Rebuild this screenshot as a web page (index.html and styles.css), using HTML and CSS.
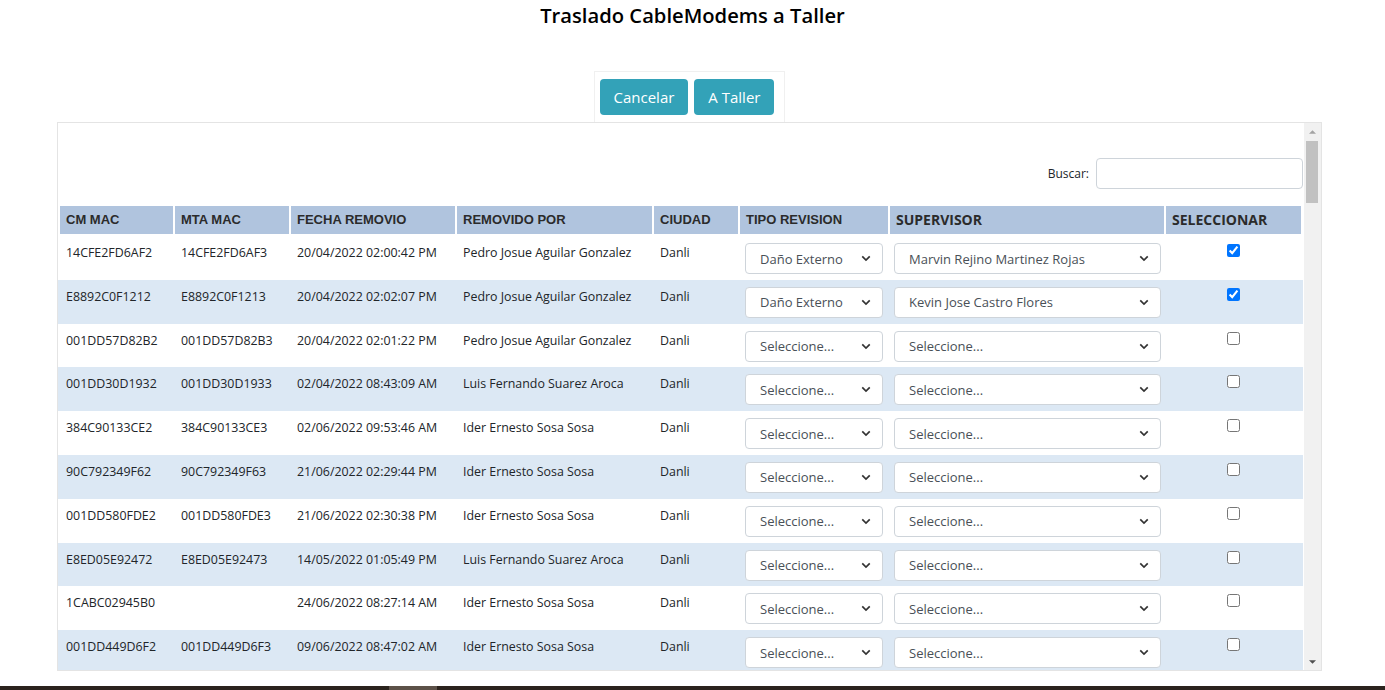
FILE: index.html
```html
<!DOCTYPE html>
<html lang="es">
<head>
<meta charset="utf-8">
<title>Traslado CableModems a Taller</title>
<link rel="stylesheet" href="styles.css">
</head>
<body>
<h1 class="title">Traslado CableModems a Taller</h1>
<div class="actions">
  <div class="btn-group">
    <button class="btn" type="button">Cancelar</button>
    <button class="btn" type="button">A Taller</button>
  </div>
</div>
<div class="panel">
  <div class="scroller">
    <div class="search">
      <label for="buscar">Buscar:</label>
      <input id="buscar" type="text">
    </div>
    <table class="grid">
      <colgroup>
        <col class="c-cm"><col class="c-mta"><col class="c-fecha"><col class="c-por"><col class="c-ciudad"><col class="c-tipo"><col class="c-sup"><col class="c-sel">
      </colgroup>
      <thead>
        <tr>
          <th>CM MAC</th><th>MTA MAC</th><th>FECHA REMOVIO</th><th>REMOVIDO POR</th><th>CIUDAD</th><th>TIPO REVISION</th><th class="alt-font">SUPERVISOR</th><th class="alt-font">SELECCIONAR</th>
        </tr>
      </thead>
      <tbody>
        <tr><td>14CFE2FD6AF2</td><td>14CFE2FD6AF3</td><td>20/04/2022 02:00:42 PM</td><td>Pedro Josue Aguilar Gonzalez</td><td>Danli</td><td class="tipo"><select class="sel"><option>Daño Externo</option></select></td><td class="sup"><select class="sel"><option>Marvin Rejino Martinez Rojas</option></select></td><td class="chk"><input type="checkbox" checked></td></tr>
        <tr><td>E8892C0F1212</td><td>E8892C0F1213</td><td>20/04/2022 02:02:07 PM</td><td>Pedro Josue Aguilar Gonzalez</td><td>Danli</td><td class="tipo"><select class="sel"><option>Daño Externo</option></select></td><td class="sup"><select class="sel"><option>Kevin Jose Castro Flores</option></select></td><td class="chk"><input type="checkbox" checked></td></tr>
        <tr><td>001DD57D82B2</td><td>001DD57D82B3</td><td>20/04/2022 02:01:22 PM</td><td>Pedro Josue Aguilar Gonzalez</td><td>Danli</td><td class="tipo"><select class="sel"><option>Seleccione...</option></select></td><td class="sup"><select class="sel"><option>Seleccione...</option></select></td><td class="chk"><input type="checkbox"></td></tr>
        <tr><td>001DD30D1932</td><td>001DD30D1933</td><td>02/04/2022 08:43:09 AM</td><td>Luis Fernando Suarez Aroca</td><td>Danli</td><td class="tipo"><select class="sel"><option>Seleccione...</option></select></td><td class="sup"><select class="sel"><option>Seleccione...</option></select></td><td class="chk"><input type="checkbox"></td></tr>
        <tr><td>384C90133CE2</td><td>384C90133CE3</td><td>02/06/2022 09:53:46 AM</td><td>Ider Ernesto Sosa Sosa</td><td>Danli</td><td class="tipo"><select class="sel"><option>Seleccione...</option></select></td><td class="sup"><select class="sel"><option>Seleccione...</option></select></td><td class="chk"><input type="checkbox"></td></tr>
        <tr><td>90C792349F62</td><td>90C792349F63</td><td>21/06/2022 02:29:44 PM</td><td>Ider Ernesto Sosa Sosa</td><td>Danli</td><td class="tipo"><select class="sel"><option>Seleccione...</option></select></td><td class="sup"><select class="sel"><option>Seleccione...</option></select></td><td class="chk"><input type="checkbox"></td></tr>
        <tr><td>001DD580FDE2</td><td>001DD580FDE3</td><td>21/06/2022 02:30:38 PM</td><td>Ider Ernesto Sosa Sosa</td><td>Danli</td><td class="tipo"><select class="sel"><option>Seleccione...</option></select></td><td class="sup"><select class="sel"><option>Seleccione...</option></select></td><td class="chk"><input type="checkbox"></td></tr>
        <tr><td>E8ED05E92472</td><td>E8ED05E92473</td><td>14/05/2022 01:05:49 PM</td><td>Luis Fernando Suarez Aroca</td><td>Danli</td><td class="tipo"><select class="sel"><option>Seleccione...</option></select></td><td class="sup"><select class="sel"><option>Seleccione...</option></select></td><td class="chk"><input type="checkbox"></td></tr>
        <tr><td>1CABC02945B0</td><td></td><td>24/06/2022 08:27:14 AM</td><td>Ider Ernesto Sosa Sosa</td><td>Danli</td><td class="tipo"><select class="sel"><option>Seleccione...</option></select></td><td class="sup"><select class="sel"><option>Seleccione...</option></select></td><td class="chk"><input type="checkbox"></td></tr>
        <tr><td>001DD449D6F2</td><td>001DD449D6F3</td><td>09/06/2022 08:47:02 AM</td><td>Ider Ernesto Sosa Sosa</td><td>Danli</td><td class="tipo"><select class="sel"><option>Seleccione...</option></select></td><td class="sup"><select class="sel"><option>Seleccione...</option></select></td><td class="chk"><input type="checkbox"></td></tr>
      </tbody>
    </table>
  </div>
  <div class="vscroll" aria-hidden="true">
    <div class="vs-btn">
      <svg width="7" height="4" viewBox="0 0 8 4"><path d="M0 4h8L4 0z" fill="#a3a3a3"/></svg>
    </div>
    <div class="vs-track"><div class="vs-thumb"></div></div>
    <div class="vs-btn">
      <svg width="7" height="4" viewBox="0 0 8 4"><path d="M0 0h8L4 4z" fill="#505050"/></svg>
    </div>
  </div>
</div>
<div class="taskbar"><span class="task-item"></span></div>
</body>
</html>
```

FILE: styles.css
```css
html, body {
  margin: 0;
  padding: 0;
}
body {
  height: 690px;
  overflow: hidden;
  display: flex;
  flex-direction: column;
  background: #fff;
  color: #212529;
  font-family: "Open Sans", "Noto Sans", sans-serif;
}
.title {
  margin: 0;
  text-align: center;
  font-size: 20.2px;
  font-weight: 600;
  line-height: 30px;
  color: #000;
}
.actions {
  display: flex;
  justify-content: center;
  margin-top: 41px;
}
.btn-group {
  display: flex;
  gap: 6px;
  margin-right: 6px;
  padding: 7px 10px 7px 5px;
  border: 1px solid #f0f0f0;
  border-bottom: 0;
}
.btn {
  height: 36px;
  padding: 0 14px;
  border: 0;
  border-radius: 4px;
  background: #33a2b8;
  color: #fff;
  font-family: "Open Sans", sans-serif;
  font-size: 15px;
  cursor: pointer;
}
.panel {
  box-sizing: border-box;
  height: 549px;
  margin: 0 63px 0 57px;
  border: 1px solid #e4e4e4;
  display: flex;
}
.scroller {
  flex: 1;
  min-width: 0;
  overflow: hidden;
}
.vscroll {
  width: 17px;
  flex: none;
  background: #f1f1f1;
  display: flex;
  flex-direction: column;
}
.vs-btn {
  height: 17px;
  flex: none;
  display: flex;
  align-items: center;
  justify-content: center;
}
.vs-track {
  flex: 1;
  padding: 1px 3px 0 2px;
}
.vs-thumb {
  height: 62px;
  background: #c1c1c1;
}
.search {
  display: flex;
  justify-content: flex-end;
  align-items: center;
  gap: 7px;
  padding: 35px 1px 17px 0;
}
.search label {
  font-size: 12px;
  color: #212529;
}
.search input {
  box-sizing: border-box;
  width: 207px;
  height: 31px;
  border: 1px solid #ced4da;
  border-radius: 4px;
  outline: none;
}
.grid {
  width: 1245px;
  table-layout: fixed;
  border-collapse: separate;
  border-spacing: 0;
}
.c-cm { width: 115px; }
.c-mta { width: 116px; }
.c-fecha { width: 166px; }
.c-por { width: 197px; }
.c-ciudad { width: 86px; }
.c-tipo { width: 150px; }
.c-sup { width: 276px; }
.c-sel { width: 139px; }
.grid th {
  padding: 0 6px;
  line-height: 28px;
  background: #b0c4de;
  border-left: 2px solid #fff;
  border-bottom: 2px solid #fff;
  text-align: left;
  font-family: "Liberation Sans", Arial, sans-serif;
  font-size: 13px;
  font-weight: bold;
  color: #2b2b2b;
  white-space: nowrap;
}
.grid th.alt-font {
  font-family: "Open Sans", sans-serif;
  font-weight: 700;
  font-size: 14px;
}
.grid th:last-child {
  border-right: 2px solid #fff;
}
.grid td {
  padding: 7px 6px 5.8px 8px;
  vertical-align: top;
  font-size: 12.4px;
  line-height: 19px;
  color: #212529;
  white-space: nowrap;
  overflow: hidden;
}
.grid tbody tr:nth-child(even) td {
  background: #dce8f4;
}
.grid td.tipo {
  padding-left: 7px;
  padding-right: 5px;
}
.grid td.sup {
  padding-left: 6px;
  padding-right: 3px;
}
.grid td.chk {
  text-align: center;
  padding-left: 6px;
}
.grid td.chk input {
  width: 13px;
  height: 13px;
  margin: 0;
}
.sel {
  display: block;
  box-sizing: border-box;
  width: 100%;
  height: 31px;
  padding: 0 28px 0 14px;
  border: 1px solid #ced4da;
  border-radius: 4px;
  appearance: none;
  -webkit-appearance: none;
  background: #fff url("data:image/svg+xml,%3Csvg xmlns='http://www.w3.org/2000/svg' viewBox='0 0 12 8'%3E%3Cpath d='M1.5 1.5 6 6l4.5-4.5' stroke='%23333' stroke-width='2' fill='none'/%3E%3C/svg%3E") no-repeat right 11px center / 10px 7px;
  font-family: "Open Sans", sans-serif;
  font-size: 13px;
  color: #495057;
}
.taskbar {
  margin-top: auto;
  height: 4px;
  background: #2b231d;
  display: flex;
}
.task-item {
  display: block;
  margin-left: 389px;
  width: 48px;
  height: 100%;
  background: #5c5148;
}
```
